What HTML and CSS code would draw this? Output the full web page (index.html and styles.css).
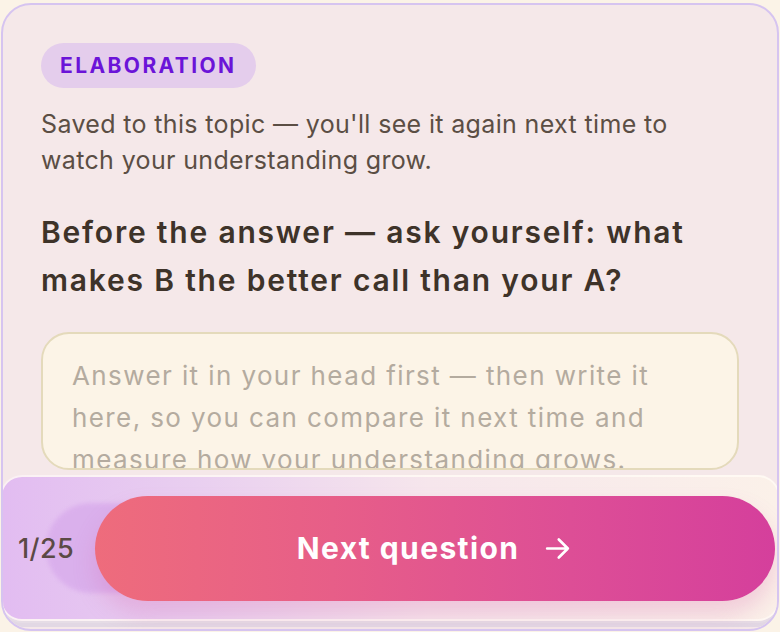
FILE: index.html
```html
<!DOCTYPE html>
<html lang="en">
<head>
<meta charset="utf-8">
<title>Elaboration</title>
<link rel="stylesheet" href="styles.css">
</head>
<body>
<section class="card">
  <span class="badge">ELABORATION</span>
  <p class="note">Saved to this topic — you'll see it again next time to watch your understanding grow.</p>
  <h2 class="prompt">Before the answer — ask yourself: what makes B the better call than your A?</h2>
  <textarea class="answer" placeholder="Answer it in your head first — then write it here, so you can compare it next time and measure how your understanding grows."></textarea>

  <div class="footer">
    <span class="counter">1/25</span>
    <button class="next" type="button">
      <span>Next question</span>
      <svg class="arrow" width="31" height="31" viewBox="0 0 24 24" fill="none" stroke="currentColor" stroke-width="2.1" stroke-linecap="round" stroke-linejoin="round"><path d="M4 12h16M13 5l7 7-7 7"/></svg>
    </button>
  </div>
</section>
</body>
</html>
```

FILE: styles.css
```css
* { box-sizing: border-box; }

html, body {
  margin: 0;
  height: 100%;
  overflow: hidden;
}

body {
  background: #fbf3e7;
  font-family: "Inter", "Open Sans", sans-serif;
  padding: 3px 1px 0 1px;
}

.card {
  position: relative;
  height: 628px;
  background: #f5e8e9;
  border: 2px solid #d6c4f0;
  border-radius: 30px;
  padding: 38px 38px 0 38px;
  display: flex;
  flex-direction: column;
  align-items: flex-start;
  overflow: hidden;
}

.badge {
  display: inline-flex;
  align-items: center;
  height: 45px;
  padding: 0 19px 0 19px;
  border-radius: 23px;
  background: #e4cdec;
  color: #6b14d8;
  font-weight: 700;
  font-size: 21px;
  letter-spacing: 2.4px;
}

.note {
  margin: 18px 0 0 0;
  font-size: 25px;
  line-height: 36px;
  color: #5b4e44;
  letter-spacing: 0.35px;
}

.prompt {
  margin: 30px 0 0 0;
  font-size: 30px;
  line-height: 48px;
  font-weight: 600;
  color: #3e3329;
  letter-spacing: 1.8px;
}

.answer {
  margin-top: 28px;
  width: 698px;
  height: 138px;
  flex: none;
  resize: none;
  border: 2px solid #e4dabb;
  border-radius: 28px;
  background: #fcf4e7;
  padding: 21px 29px 0 29px;
  font-family: inherit;
  font-size: 26px;
  line-height: 42px;
  color: #5b4e44;
  letter-spacing: 1.4px;
  overflow: hidden;
}

.answer::placeholder {
  color: #b4ab9f;
}

/* floating action bar pinned to the bottom of the card */
.footer {
  position: absolute;
  left: -3px;
  right: -3px;
  top: 470px;
  height: 146px;
  border-radius: 22px;
  border: 2px solid rgba(255, 250, 245, 0.85);
  background: linear-gradient(90deg, #e2bcf1 0%, #e9cff0 25%, #f6e6ec 55%, #fbf1e9 100%);
  box-shadow: 0 2px 0 #e6dde6, 0 6px 0 #e2d8e4;
  display: flex;
  align-items: center;
  gap: 21px;
  padding: 0 3px 0 16px;
}

.counter {
  position: relative;
  z-index: 1;
  font-size: 27px;
  font-weight: 500;
  color: #5b4a45;
  letter-spacing: 0.4px;
}

.footer::before {
  content: "";
  position: absolute;
  left: 44px;
  top: 26px;
  width: 160px;
  height: 90px;
  border-radius: 45px;
  background: #d9adec;
  filter: blur(2px);
  opacity: 0.85;
}

.next {
  position: relative;
  flex: 1;
  height: 105px;
  border: none;
  border-radius: 53px;
  background: linear-gradient(90deg, #ee6c7c 0%, #e75e88 35%, #dd4e96 70%, #d53f9c 100%);
  color: #fff;
  font-family: inherit;
  font-size: 30px;
  font-weight: 700;
  letter-spacing: 1.4px;
  display: flex;
  align-items: center;
  justify-content: center;
  gap: 23px;
  padding: 0;
  box-shadow: 0 14px 22px rgba(214, 100, 170, 0.25);
}

.arrow {
  display: block;
}
```
